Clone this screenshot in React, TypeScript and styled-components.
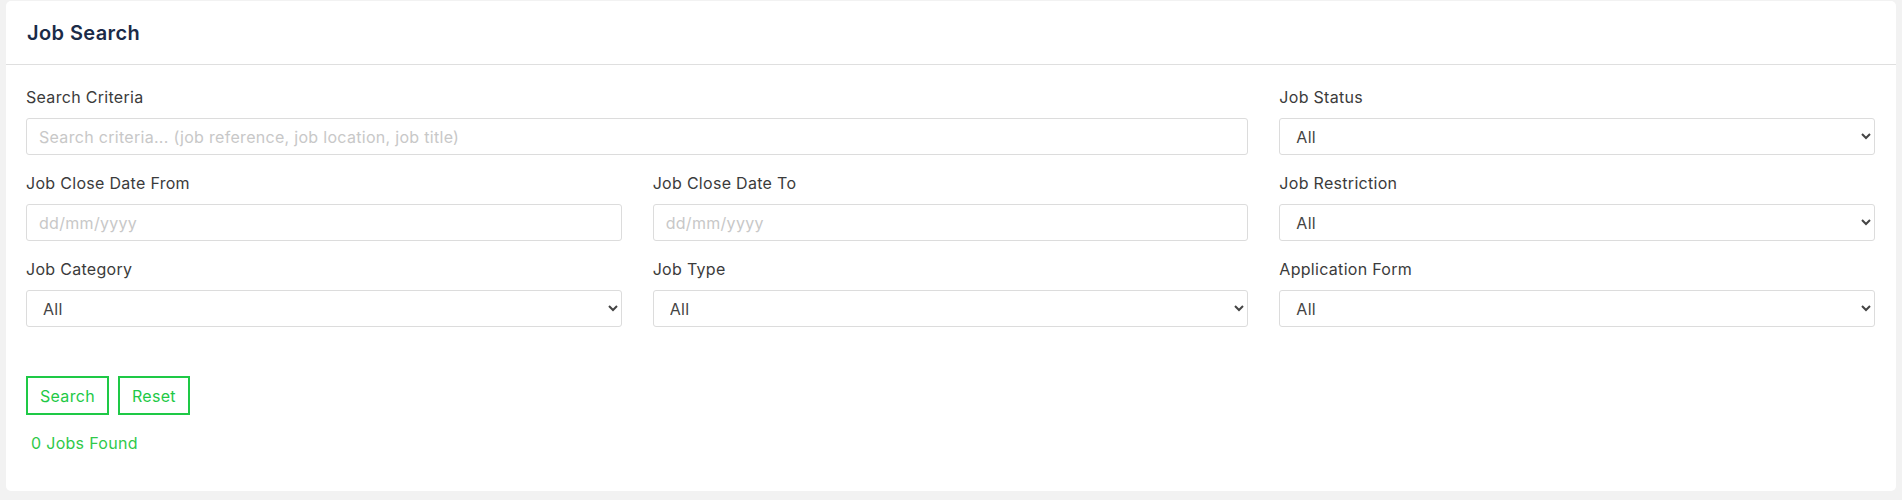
import { createGlobalStyle } from "styled-components";
import styled from "styled-components";

const GlobalStyle = createGlobalStyle`
  html, body {
    margin: 0;
    padding: 0;
    background: #f2f2f2;
    font-family: "Inter", "Open Sans", sans-serif;
  }
  * { box-sizing: border-box; }
`;

export default function App() {
  return (
    <>
      <GlobalStyle />
      <Page>
        <Card>
          <CardHeader>
            <Title>Job Search</Title>
          </CardHeader>
          <CardBody>
            <FieldGrid>
              <Field $span={2}>
                <Label htmlFor="criteria">Search Criteria</Label>
                <TextInput
                  id="criteria"
                  placeholder="Search criteria... (job reference, job location, job title)"
                />
              </Field>
              <Field>
                <Label htmlFor="status">Job Status</Label>
                <Select id="status">
                  <option>All</option>
                </Select>
              </Field>

              <Field>
                <Label htmlFor="from">Job Close Date From</Label>
                <TextInput id="from" placeholder="dd/mm/yyyy" />
              </Field>
              <Field>
                <Label htmlFor="to">Job Close Date To</Label>
                <TextInput id="to" placeholder="dd/mm/yyyy" />
              </Field>
              <Field>
                <Label htmlFor="restriction">Job Restriction</Label>
                <Select id="restriction">
                  <option>All</option>
                </Select>
              </Field>

              <Field>
                <Label htmlFor="category">Job Category</Label>
                <Select id="category">
                  <option>All</option>
                </Select>
              </Field>
              <Field>
                <Label htmlFor="type">Job Type</Label>
                <Select id="type">
                  <option>All</option>
                </Select>
              </Field>
              <Field>
                <Label htmlFor="form">Application Form</Label>
                <Select id="form">
                  <option>All</option>
                </Select>
              </Field>
            </FieldGrid>

            <Actions>
              <OutlineButton type="button">Search</OutlineButton>
              <OutlineButton type="button">Reset</OutlineButton>
            </Actions>
            <ResultCount>0 Jobs Found</ResultCount>
          </CardBody>
        </Card>
      </Page>
    </>
  );
}

const Page = styled.div`
  padding: 1px 6px 9px 6px;
`;

const Card = styled.section`
  background: #fff;
  border-radius: 5px;
`;

const CardHeader = styled.header`
  height: 64px;
  display: flex;
  align-items: center;
  padding: 0 21px;
  border-bottom: 1px solid #dfdfdf;
`;

const Title = styled.h2`
  margin: 0;
  font-size: 20px;
  font-weight: 600;
  letter-spacing: 0.4px;
  color: #1b2b48;
`;

const CardBody = styled.div`
  padding: 20px 21px 36px 20px;
`;

const FieldGrid = styled.div`
  display: grid;
  grid-template-columns: repeat(3, 1fr);
  column-gap: 31px;
  row-gap: 16px;
`;

type FieldProps = { $span?: number };
const Field = styled.div<FieldProps>`
  grid-column: span ${(p) => p.$span ?? 1};
  display: flex;
  flex-direction: column;
`;

const Label = styled.label`
  font-size: 16px;
  line-height: 24px;
  letter-spacing: 0.3px;
  color: #3b3b3b;
  margin-bottom: 9px;
`;

const TextInput = styled.input`
  height: 37px;
  padding: 0 12px;
  border: 1px solid #dcdcdc;
  border-radius: 3px;
  font: inherit;
  font-size: 16px;
  letter-spacing: 0.3px;
  color: #333;
  outline: none;
  &::placeholder {
    color: #c8c8c8;
  }
`;

const Select = styled.select`
  height: 37px;
  padding: 0 8px 0 12px;
  border: 1px solid #dcdcdc;
  border-radius: 3px;
  background: #fff;
  font: inherit;
  font-size: 16px;
  letter-spacing: 0.3px;
  color: #444;
  outline: none;
`;

const Actions = styled.div`
  display: flex;
  gap: 9px;
  margin-top: 49px;
`;

const OutlineButton = styled.button`
  height: 39px;
  padding: 0 12px;
  background: #fff;
  border: 2px solid #1ec946;
  border-radius: 0;
  font: inherit;
  font-size: 16px;
  letter-spacing: 0.3px;
  color: #1ec946;
  cursor: pointer;
`;

const ResultCount = styled.p`
  margin: 16px 0 0 5px;
  font-size: 16px;
  line-height: 24px;
  letter-spacing: 0.3px;
  color: #30c94a;
`;
